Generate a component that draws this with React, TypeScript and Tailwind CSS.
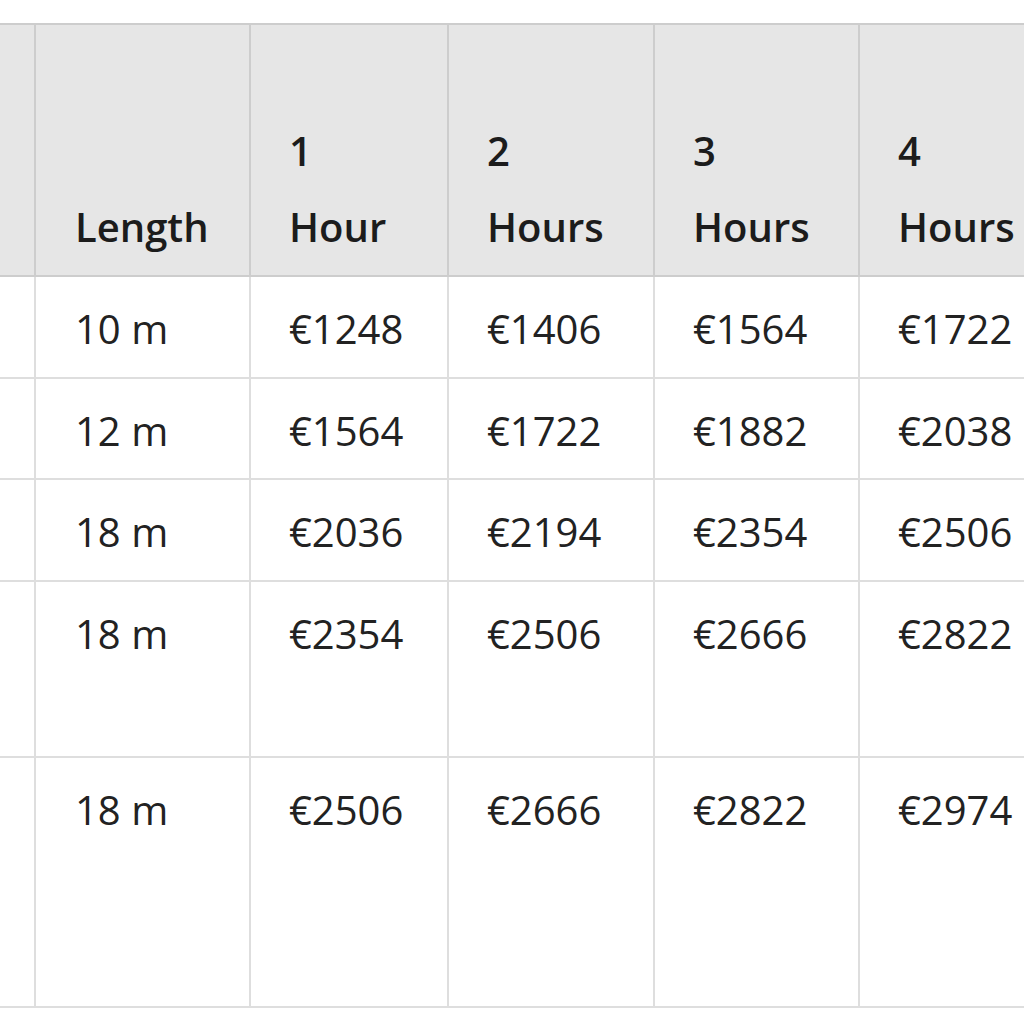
const hours = [
  { n: "1", label: "Hour" },
  { n: "2", label: "Hours" },
  { n: "3", label: "Hours" },
  { n: "4", label: "Hours" },
]

const rows = [
  { length: "10 m", prices: ["€1248", "€1406", "€1564", "€1722"], h: "h-[102px]" },
  { length: "12 m", prices: ["€1564", "€1722", "€1882", "€2038"], h: "h-[101px]" },
  { length: "18 m", prices: ["€2036", "€2194", "€2354", "€2506"], h: "h-[102px]" },
  { length: "18 m", prices: ["€2354", "€2506", "€2666", "€2822"], h: "h-[176px]" },
  { length: "18 m", prices: ["€2506", "€2666", "€2822", "€2974"], h: "h-[250px]" },
]

export default function App() {
  return (
    <div className="w-[1024px] h-[1024px] overflow-hidden bg-white pt-[23px] font-['Open_Sans',sans-serif] text-[40px]">
      <table className="table-fixed border-collapse w-[1060px]">
        <colgroup>
          <col className="w-[35px]" />
          <col className="w-[215px]" />
          <col className="w-[198px]" />
          <col className="w-[206px]" />
          <col className="w-[205px]" />
          <col className="w-[201px]" />
        </colgroup>
        <thead>
          <tr className="h-[252px] bg-[#e6e6e6]">
            <th className="border-2 border-l-0 border-[#cdcdcd]" />
            <th className="border-2 border-[#cdcdcd] align-bottom text-left pl-[39px] pb-[10px] font-semibold text-[#1c1c1c] leading-[76px]">
              Length
            </th>
            {hours.map((h) => (
              <th
                key={h.n}
                className="border-2 border-[#cdcdcd] align-bottom text-left pl-[38px] pb-[10px] font-semibold text-[#1c1c1c] leading-[76px]"
              >
                <span className="block">{h.n}</span>
                <span className="block">{h.label}</span>
              </th>
            ))}
          </tr>
        </thead>
        <tbody>
          {rows.map((r, i) => (
            <tr key={i} className={r.h}>
              <td className="border-2 border-l-0 border-[#dedede]" />
              <td className="border-2 border-[#dedede] align-top pl-[39px] pt-[22px] leading-[60px] text-[#222]">
                {r.length}
              </td>
              {r.prices.map((p, j) => (
                <td
                  key={j}
                  className="border-2 border-[#dedede] align-top pl-[38px] pt-[22px] leading-[60px] text-[#222]"
                >
                  {p}
                </td>
              ))}
              <td className="border-2 border-[#dedede]" />
            </tr>
          ))}
        </tbody>
      </table>
    </div>
  )
}
